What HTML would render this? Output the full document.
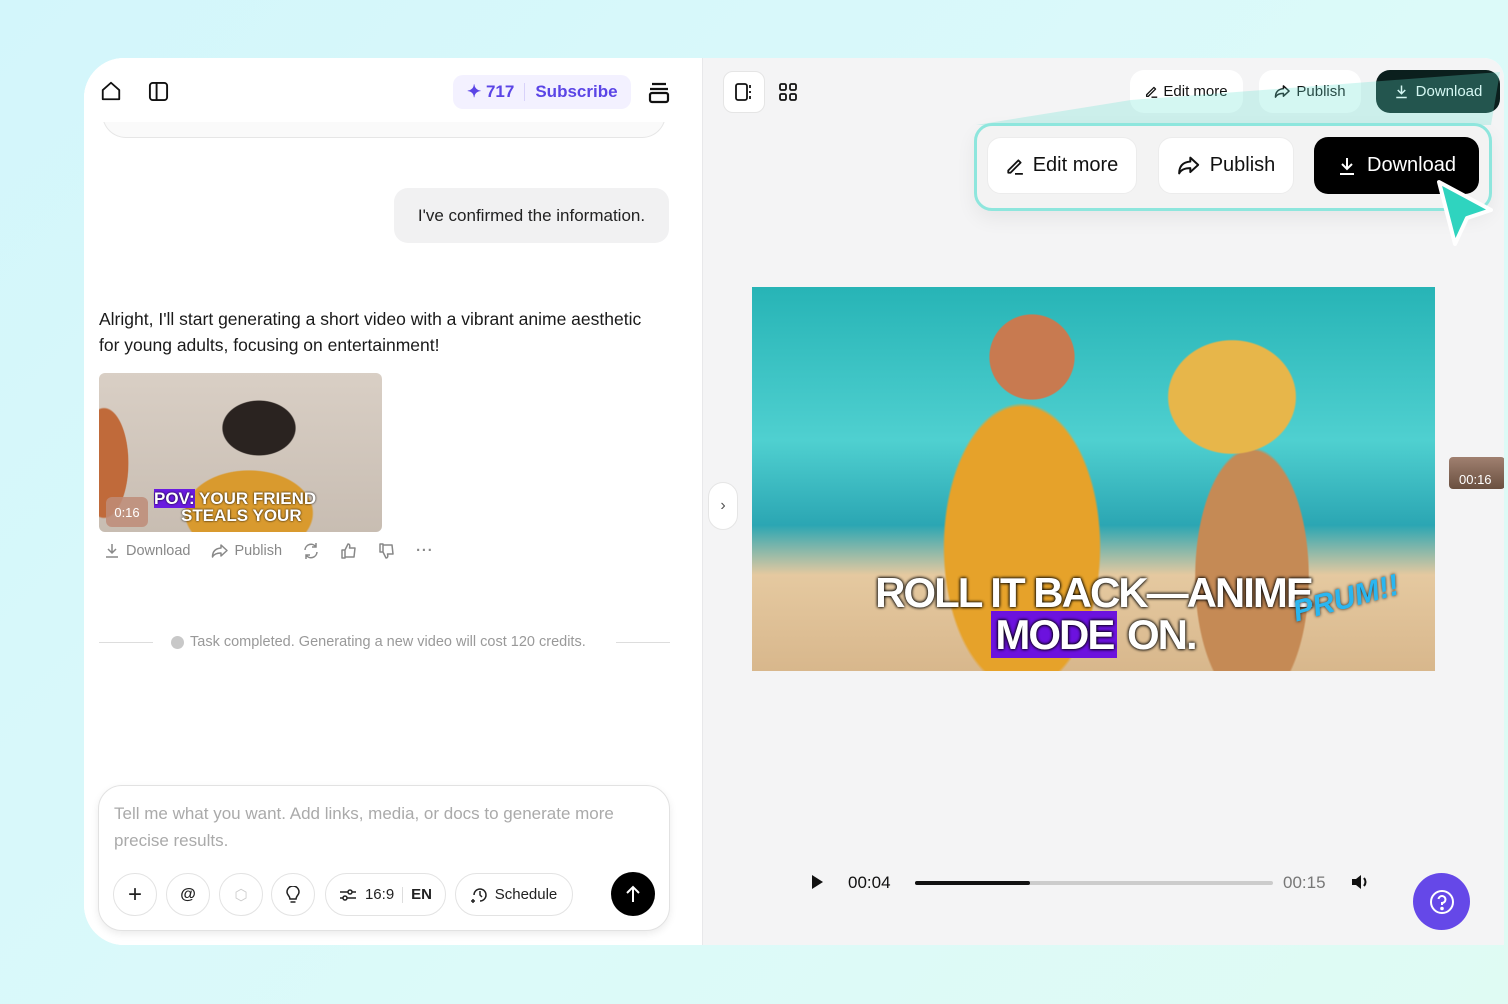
<!DOCTYPE html>
<html><head><meta charset="utf-8"><style>
*{box-sizing:border-box;margin:0;padding:0}
body{width:1508px;height:1004px;overflow:hidden;background:linear-gradient(135deg,#d3f6fb 0%,#dcfaf9 60%,#dffbf3 100%);font-family:"Liberation Sans",sans-serif;position:relative}
.card{position:absolute;left:84px;top:58px;width:1420px;height:887px;border-radius:40px 20px 0 40px;overflow:hidden;background:#fff}
.left{position:absolute;left:0;top:0;width:618px;height:887px;background:#fff}
.right{position:absolute;left:618px;top:0;width:802px;height:887px;background:#f4f4f5;border-left:1px solid #e8e8ea}
.ab{position:absolute}
svg{display:block}
.btn{position:absolute;background:#fff;border-radius:14px;display:flex;align-items:center;justify-content:center;gap:7px;color:#111;font-size:15px}
.pill{position:absolute;border:1px solid #e3e3e3;border-radius:22px;height:43px;display:flex;align-items:center;justify-content:center;background:#fff;font-size:15px;color:#222}
</style></head><body>
<div class="card">
<div class="left">
  <div class="ab" style="left:18px;top:55px;width:564px;height:25px;border:1px solid #e6e6e6;border-top:none;border-radius:0 0 24px 24px;background:#fafafa"></div>
  <div class="ab" style="left:0;top:0;width:618px;height:64px;background:#fff"></div>
  <svg class="ab" style="left:16px;top:22px" width="22" height="22" viewBox="0 0 24 24" fill="none" stroke="#111" stroke-width="2" stroke-linejoin="round"><path d="M3 11 L12 3 L21 11 V21 H3 Z"/></svg>
  <svg class="ab" style="left:64px;top:23px" width="21" height="21" viewBox="0 0 22 22" fill="none" stroke="#111" stroke-width="2"><rect x="2" y="2" width="18" height="18" rx="3"/><path d="M9 2V20"/></svg>
  <div class="ab" style="left:369px;top:17px;width:178px;height:34px;background:#f3f1ff;border-radius:10px;display:flex;align-items:center;padding-left:14px;color:#5b45e6;font-weight:bold;font-size:17px">✦&nbsp;717<span style="width:1px;height:18px;background:#d8d2fa;margin:0 10px"></span>Subscribe</div>
  <svg class="ab" style="left:563px;top:23px" width="24" height="24" viewBox="0 0 24 24" fill="none" stroke="#111" stroke-width="2.2"><path d="M5 3H19M3 8H21"/><rect x="3" y="12" width="18" height="9" rx="2"/></svg>
  <div class="ab" style="left:310px;top:130px;width:275px;height:55px;background:#f1f1f2;border-radius:14px;font-size:17px;color:#222;display:flex;align-items:center;justify-content:center">I've confirmed the information.</div>
  <div class="ab" style="left:15px;top:248px;width:565px;font-size:17.5px;line-height:26px;color:#1a1a1a">Alright, I'll start generating a short video with a vibrant anime aesthetic for young adults, focusing on entertainment!</div>
  <div class="ab" style="left:15px;top:315px;width:283px;height:159px;border-radius:6px;overflow:hidden;background:radial-gradient(ellipse 60px 45px at 160px 55px,#2a2320 60%,transparent 62%),radial-gradient(ellipse 90px 60px at 150px 140px,#d99a2e 70%,transparent 72%),radial-gradient(ellipse 40px 90px at 5px 90px,#c06a3a 60%,transparent 62%),linear-gradient(#d9cfc5,#c8bdb2)">
    <div class="ab" style="left:55px;top:117px;font-weight:bold;color:#fff;font-size:17px;line-height:17px;text-shadow:0 0 2px #000"><span style="background:#6a1be0">POV:</span> YOUR FRIEND<br><span style="margin-left:27px">STEALS YOUR</span></div>
    <div class="ab" style="left:7px;top:124px;width:42px;height:30px;border-radius:6px;background:rgba(190,140,120,.85);color:#fff;font-size:13px;display:flex;align-items:center;justify-content:center">0:16</div>
  </div>
  <div class="ab" style="left:20px;top:484px;display:flex;align-items:center;gap:20px;font-size:14.5px;color:#888">
    <span style="display:flex;align-items:center;gap:6px"><svg width="16" height="16" viewBox="0 0 16 16" fill="none" stroke="#888" stroke-width="1.5"><path d="M8 1V10M4 6L8 10L12 6M2 14H14"/></svg>Download</span>
    <span style="display:flex;align-items:center;gap:6px"><svg width="18" height="16" viewBox="0 0 18 16" fill="none" stroke="#888" stroke-width="1.5" stroke-linejoin="round"><path d="M10 2L16 7.5L10 13V10C6 10 3 11 1.5 14C1.5 9 4 5.5 10 5Z"/></svg>Publish</span>
    <svg width="18" height="18" viewBox="0 0 18 18" fill="none" stroke="#888" stroke-width="1.5"><path d="M3 8A6 6 0 0 1 14 5M15 10A6 6 0 0 1 4 13M14 1V5H10M4 17V13H8"/></svg>
    <svg width="18" height="18" viewBox="0 0 18 18" fill="none" stroke="#888" stroke-width="1.5" stroke-linejoin="round"><path d="M2 8H5V16H2ZM5 8L8 2C10 2 10 4 9.5 6H15L14 15H5"/></svg>
    <svg width="18" height="18" viewBox="0 0 18 18" fill="none" stroke="#888" stroke-width="1.5" stroke-linejoin="round"><path d="M2 2H5V10H2ZM5 10L8 16C10 16 10 14 9.5 12H15L14 3H5"/></svg>
    <span style="letter-spacing:1px;font-weight:bold;color:#888">···</span>
  </div>
  <div class="ab" style="left:15px;top:584px;width:54px;height:1px;background:#ddd"></div>
  <div class="ab" style="left:532px;top:584px;width:54px;height:1px;background:#ddd"></div>
  <div class="ab" style="left:87px;top:576px;font-size:14.5px;color:#999;display:flex;align-items:center;gap:6px"><span style="width:13px;height:13px;border-radius:50%;background:#c8c8c8;display:inline-block"></span>Task completed. Generating a new video will cost 120 credits.</div>
  <div class="ab" style="left:14px;top:727px;width:572px;height:146px;border:1px solid #e2e2e2;border-radius:24px;background:#fff;box-shadow:0 3px 8px rgba(0,0,0,.08)">
    <div class="ab" style="left:15px;top:14px;width:540px;font-size:17px;line-height:27px;color:#aaa">Tell me what you want. Add links, media, or docs to generate more precise results.</div>
    <div class="pill" style="left:14px;top:87px;width:44px;font-size:24px;font-weight:300">+</div>
    <div class="pill" style="left:67px;top:87px;width:44px;font-weight:bold;font-size:16px">@</div>
    <div class="pill" style="left:120px;top:87px;width:44px;color:#ccc">⬡</div>
    <div class="pill" style="left:172px;top:87px;width:44px"><svg width="16" height="18" viewBox="0 0 16 18" fill="none" stroke="#222" stroke-width="1.5"><path d="M5 13C5 10 2 9 2 6A6 6 0 0 1 14 6C14 9 11 10 11 13ZM5.5 16H10.5"/></svg></div>
    <div class="pill" style="left:226px;top:87px;width:121px;gap:8px"><svg width="18" height="14" viewBox="0 0 18 14" fill="none" stroke="#222" stroke-width="1.5"><path d="M1 4H17M1 10H17"/><circle cx="11" cy="4" r="2" fill="#fff"/><circle cx="6" cy="10" r="2" fill="#fff"/></svg>16:9<span style="width:1px;height:16px;background:#ddd"></span><b style="font-weight:600">EN</b></div>
    <div class="pill" style="left:356px;top:87px;width:118px;gap:6px"><svg width="18" height="18" viewBox="0 0 18 18" fill="none" stroke="#222" stroke-width="1.5"><path d="M3 9A6 6 0 1 1 9 15M9 5V9L11 11M2 13V17M0 15H4"/></svg>Schedule</div>
    <div class="ab" style="left:512px;top:86px;width:44px;height:44px;border-radius:50%;background:#000;display:flex;align-items:center;justify-content:center"><svg width="16" height="18" viewBox="0 0 16 18" fill="none" stroke="#fff" stroke-width="2"><path d="M8 17V2M2 8L8 2L14 8"/></svg></div>
  </div>
</div>
<div class="right">
  <div class="ab" style="left:20px;top:13px;width:42px;height:42px;background:#fff;border-radius:10px;border:1px solid #e5e5e5;display:flex;align-items:center;justify-content:center"><svg width="20" height="20" viewBox="0 0 20 20" fill="none" stroke="#111" stroke-width="1.8"><rect x="2" y="2" width="11" height="16" rx="2"/><path d="M16 3V6M16 9V11M16 14V17"/></svg></div>
  <svg class="ab" style="left:75px;top:24px" width="20" height="20" viewBox="0 0 20 20" fill="none" stroke="#111" stroke-width="1.8"><rect x="2" y="2" width="6" height="6" rx="1.5"/><rect x="12" y="2" width="6" height="6" rx="1.5"/><rect x="2" y="12" width="6" height="6" rx="1.5"/><rect x="12" y="12" width="6" height="6" rx="1.5"/></svg>
  <div class="btn" style="left:427px;top:12px;width:113px;height:43px;gap:5px"><svg width="13" height="13" viewBox="0 0 16 16" fill="none" stroke="#111" stroke-width="1.6" stroke-linejoin="round"><path d="M2 12L11 3L13 5L4 14H2ZM8 15H15"/></svg>Edit more</div>
  <div class="btn" style="left:556px;top:12px;width:102px;height:43px;gap:5px"><svg width="17" height="15" viewBox="0 0 18 16" fill="none" stroke="#111" stroke-width="1.6" stroke-linejoin="round"><path d="M10 2L16 7.5L10 13V10C6 10 3 11 1.5 14C1.5 9 4 5.5 10 5Z"/></svg>Publish</div>
  <div class="btn" style="left:673px;top:12px;width:124px;height:43px;background:#0b1f1d;color:#fff"><svg width="15" height="15" viewBox="0 0 20 20" fill="none" stroke="#fff" stroke-width="2"><path d="M10 2V13M5 8L10 13L15 8M3 18H17"/></svg>Download</div>
  <svg class="ab" style="left:0;top:0" width="802" height="140"><polygon points="273,67 428,42 797,14 788,67" fill="rgba(100,225,210,.28)"/></svg>
  <div class="ab" style="left:271px;top:65px;width:518px;height:88px;border:3px solid #8ee6dd;border-radius:18px;background:#f3f3f3;box-shadow:0 8px 20px rgba(0,0,0,.06)"></div>
  <div class="btn" style="left:284px;top:79px;width:150px;height:57px;font-size:20px;border:1px solid #ececec;gap:9px"><svg width="18" height="18" viewBox="0 0 16 16" fill="none" stroke="#111" stroke-width="1.6" stroke-linejoin="round"><path d="M2 12L11 3L13 5L4 14H2ZM8 15H15"/></svg>Edit more</div>
  <div class="btn" style="left:455px;top:79px;width:136px;height:57px;font-size:20px;border:1px solid #ececec;gap:9px"><svg width="24" height="21" viewBox="0 0 18 16" fill="none" stroke="#111" stroke-width="1.5" stroke-linejoin="round"><path d="M10 2L16 7.5L10 13V10C6 10 3 11 1.5 14C1.5 9 4 5.5 10 5Z"/></svg>Publish</div>
  <div class="btn" style="left:611px;top:79px;width:165px;height:57px;font-size:20px;background:#000;color:#fff;gap:10px"><svg width="20" height="20" viewBox="0 0 20 20" fill="none" stroke="#fff" stroke-width="2"><path d="M10 2V13M5 8L10 13L15 8M3 18H17"/></svg>Download</div>
  <svg class="ab" style="left:728px;top:118px" width="66" height="76" viewBox="0 0 66 76"><path d="M8 6L60 34L36 42L24 68Z" fill="#2fd4bf" stroke="#fff" stroke-width="4" stroke-linejoin="round"/></svg>
  <div class="ab" style="left:49px;top:229px;width:683px;height:384px;overflow:hidden;background:radial-gradient(ellipse 110px 200px at 270px 260px,#e6a22a 70%,transparent 72%),radial-gradient(ellipse 60px 60px at 280px 70px,#c87a50 70%,transparent 72%),radial-gradient(ellipse 90px 80px at 480px 110px,#e7b64a 70%,transparent 72%),radial-gradient(ellipse 80px 180px at 500px 290px,#c58a55 70%,transparent 72%),linear-gradient(#27b4b6 0%,#4fd0d0 40%,#2ba6b3 62%,#e5c9a0 75%,#d8b78c 100%)">
    <div class="ab" style="left:0;top:285px;width:683px;text-align:center;color:#fff;font-weight:bold;font-size:42px;line-height:42px;letter-spacing:-2px;text-shadow:0 0 3px #000,0 0 3px #000">ROLL IT BACK—ANIME<br><span style="background:#6c12de;padding:0 4px">MODE</span> ON.</div>
    <div class="ab" style="left:540px;top:295px;color:#2ab6f0;font-weight:bold;font-style:italic;font-size:30px;transform:rotate(-15deg);text-shadow:0 0 3px #222">PRUM!!</div>
  </div>
  <div class="ab" style="left:746px;top:399px;width:56px;height:32px;border-radius:4px;background:linear-gradient(#a08070,#6a5040);color:#fff;font-size:13px;padding:15px 0 0 10px">00:16</div>
  <div class="ab" style="left:5px;top:424px;width:30px;height:48px;border-radius:15px;background:#fff;border:1px solid #e5e5e5;display:flex;align-items:center;justify-content:center;color:#555;font-size:16px">›</div>
  <div class="ab" style="left:109px;top:817px;width:0;height:0;border-left:11px solid #111;border-top:7px solid transparent;border-bottom:7px solid transparent"></div>
  <div class="ab" style="left:145px;top:815px;font-size:17px;color:#111">00:04</div>
  <div class="ab" style="left:212px;top:823px;width:358px;height:4px;background:#ccc;border-radius:2px"><div style="width:115px;height:4px;background:#111;border-radius:2px"></div></div>
  <div class="ab" style="left:580px;top:815px;font-size:17px;color:#777">00:15</div>
  <svg class="ab" style="left:647px;top:815px" width="20" height="18" viewBox="0 0 20 18"><path d="M2 6H6L11 2V16L6 12H2Z" fill="#111"/><path d="M14 5Q17 9 14 13" stroke="#111" stroke-width="2" fill="none"/></svg>
  <div class="ab" style="left:710px;top:815px;width:57px;height:57px;border-radius:50%;background:#6548e8;display:flex;align-items:center;justify-content:center"><svg width="26" height="26" viewBox="0 0 26 26" fill="none" stroke="#fff" stroke-width="2"><circle cx="13" cy="13" r="11"/><path d="M9.5 10A3.5 3.5 0 1 1 13 14V16"/><circle cx="13" cy="19.5" r=".8" fill="#fff"/></svg></div>
</div>
</div>
</body></html>
